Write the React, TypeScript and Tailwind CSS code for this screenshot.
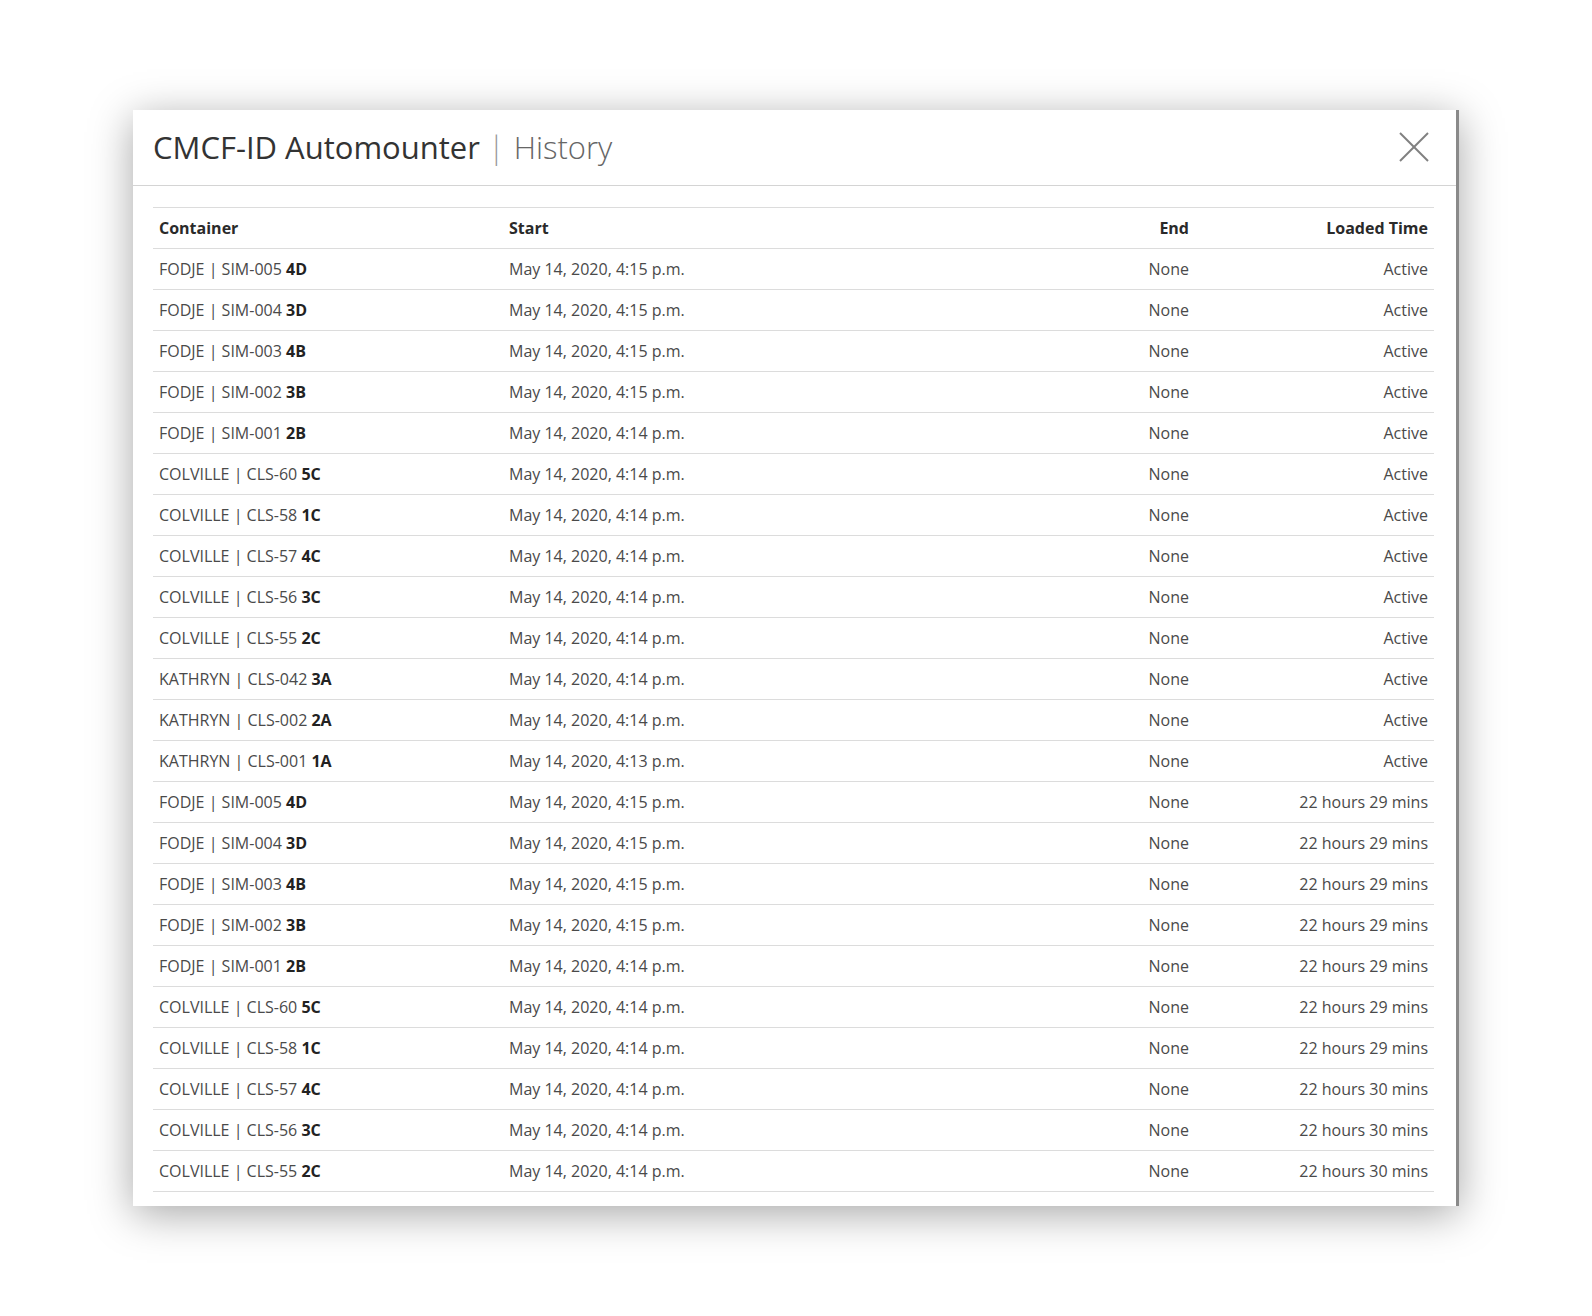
import React from "react";

type Row = { site: string; id: string; pos: string; start: string; loaded: string };

const base: Omit<Row, "loaded">[] = [
  { site: "FODJE", id: "SIM-005", pos: "4D", start: "4:15" },
  { site: "FODJE", id: "SIM-004", pos: "3D", start: "4:15" },
  { site: "FODJE", id: "SIM-003", pos: "4B", start: "4:15" },
  { site: "FODJE", id: "SIM-002", pos: "3B", start: "4:15" },
  { site: "FODJE", id: "SIM-001", pos: "2B", start: "4:14" },
  { site: "COLVILLE", id: "CLS-60", pos: "5C", start: "4:14" },
  { site: "COLVILLE", id: "CLS-58", pos: "1C", start: "4:14" },
  { site: "COLVILLE", id: "CLS-57", pos: "4C", start: "4:14" },
  { site: "COLVILLE", id: "CLS-56", pos: "3C", start: "4:14" },
  { site: "COLVILLE", id: "CLS-55", pos: "2C", start: "4:14" },
  { site: "KATHRYN", id: "CLS-042", pos: "3A", start: "4:14" },
  { site: "KATHRYN", id: "CLS-002", pos: "2A", start: "4:14" },
  { site: "KATHRYN", id: "CLS-001", pos: "1A", start: "4:13" },
];

const rows: Row[] = [
  ...base.map((r) => ({ ...r, loaded: "Active" })),
  ...base.map((r, i) => ({ ...r, loaded: i < 7 ? "22 hours 29 mins" : "22 hours 30 mins" })),
];

const cols = "grid grid-cols-[350px_492px_188px_1fr]";

export default function App() {
  return (
    <div className="min-h-[1316px] bg-white pt-[110px]" style={{ fontFamily: '"Open Sans", "Noto Sans", sans-serif' }}>
      <div className="mx-auto flex h-[1096px] w-[1326px] flex-col overflow-hidden border-r-[3px] border-[#8a8a8a] bg-white shadow-[0_8px_40px_rgba(0,0,0,0.35)]">
        <div className="flex h-[76px] shrink-0 items-center justify-between border-b border-[#d4d4d4] pl-5 pr-[27px]">
          <div className="flex items-baseline text-[31px] leading-none">
            <span className="font-medium text-[#333]">CMCF-ID Automounter</span>
            <span className="ml-[8px] mr-[9px] font-light text-[#9a9a9a]">|</span>
            <span className="font-light text-[#666]">History</span>
          </div>
          <svg width="30" height="30" viewBox="0 0 30 30" className="mb-[2px]">
            <line x1="1" y1="1" x2="29" y2="29" stroke="#808080" strokeWidth="2" />
            <line x1="29" y1="1" x2="1" y2="29" stroke="#808080" strokeWidth="2" />
          </svg>
        </div>
        <div className="flex-1 overflow-hidden pl-5 pr-[22px] pt-[21px]">
          <div className="border-t border-[#dcdcdc] text-[16px]">
            <div className={`${cols} h-[41px] items-center border-b border-[#dcdcdc] px-[6px] font-bold text-[#2a2a2a]`}>
              <div>Container</div>
              <div>Start</div>
              <div className="text-right">End</div>
              <div className="text-right">Loaded Time</div>
            </div>
            {rows.map((r, i) => (
              <div
                key={i}
                className={`${cols} h-[41px] items-center border-b border-[#dcdcdc] px-[6px] text-[#4a4a4a]`}
              >
                <div>
                  {r.site} | {r.id} <span className="font-bold text-[#222]">{r.pos}</span>
                </div>
                <div>May 14, 2020, {r.start} p.m.</div>
                <div className="text-right">None</div>
                <div className="text-right">{r.loaded}</div>
              </div>
            ))}
          </div>
        </div>
      </div>
    </div>
  );
}
